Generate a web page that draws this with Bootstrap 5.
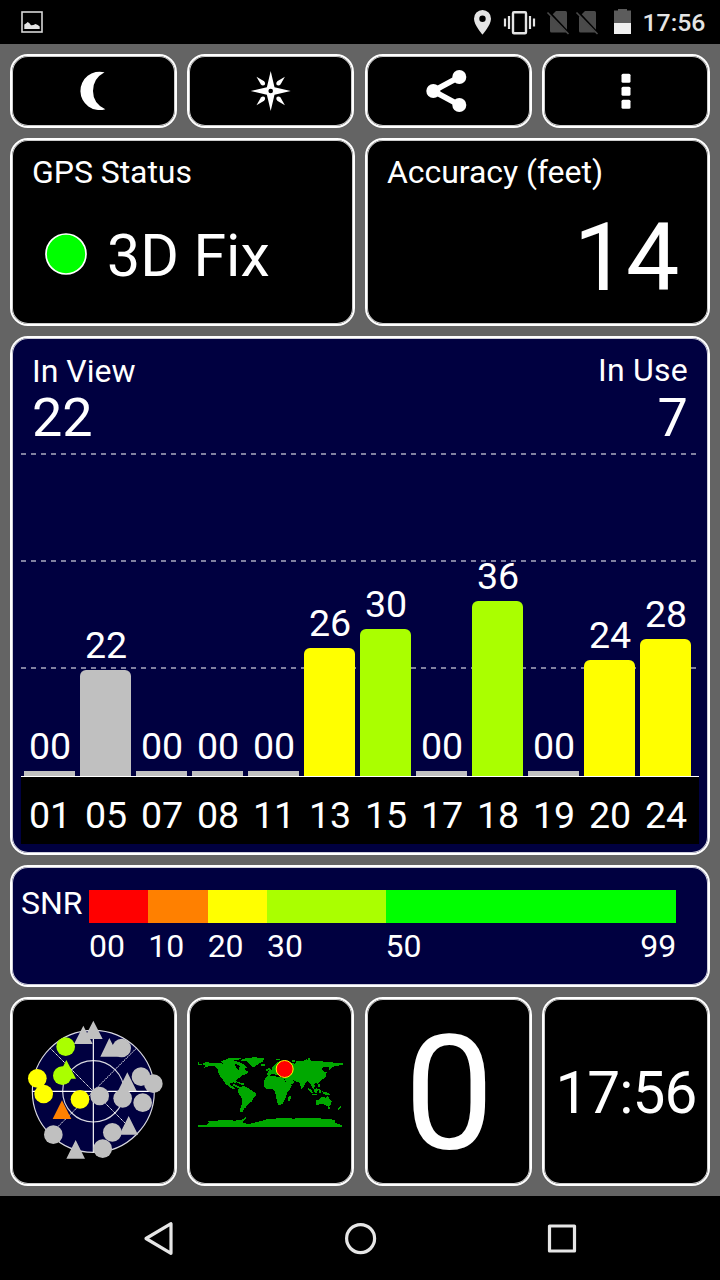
<!DOCTYPE html>
<html lang="en">
<head>
<meta charset="utf-8">
<meta name="viewport" content="width=device-width, initial-scale=1">
<title>GPS Test</title>
<link href="https://cdn.jsdelivr.net/npm/bootstrap@5.3.0/dist/css/bootstrap.min.css" rel="stylesheet">
<style>
body { width: 720px; height: 1280px; overflow: hidden; background: #000; color: #fff; font-family: Roboto, sans-serif; font-size: 32px; line-height: 38px; }
svg { display: block; }
.statusbar { height: 44px; color: #e4e4e4; font-size: 24.8px; font-weight: 500; line-height: 46px; }
.dash { height: 1152px; background: #646464; padding: 10px; gap: 10px; }
.tiles { display: grid; gap: 10px; }
.tiles-4 { grid-template-columns: 167px 167px 167px 168px; column-gap: 10.33px; }
.tiles-2 { grid-template-columns: 345px 345px; }
.panel { background: #000; border: 2px solid #fff; border-radius: 18px; box-shadow: inset 0 0 0 1px rgba(255,255,255,.8); color: #fff; overflow: hidden; }
.panel-navy { background: #000040; }
.row-tools { height: 74px; }
.row-info { height: 188px; }
.row-chart { height: 519px; }
.row-snr { height: 122px; }
.row-mini { height: 189px; }
.panel-title { padding: 13px 20px 0; letter-spacing: -.05px; }
.fix { font-size: 59px; line-height: 70px; padding: 30px 0 0 33px; }
.fix svg { margin-top: -4px; }
.fix span { margin-left: 4px; }
.acc { font-size: 95px; line-height: 112px; letter-spacing: -1px; padding: 11px 29.500px 0 0; }
.counts { height: 115px; padding: 14px 20px 0; }
.count { font-size: 54px; line-height: 56px; }
.inuse { margin-top: -1px; letter-spacing: .25px; }
.inuse .count { padding-top: 1px; }
.plot { height: 324px; margin: 0 9px; border-bottom: 1px solid #fff;
  --d: repeating-linear-gradient(90deg, #8080a0 0 5px, transparent 5px 10px);
  background: var(--d) 0 0/675px 2px no-repeat, var(--d) 0 107px/675px 2px no-repeat, var(--d) 0 214px/675px 2px no-repeat; }
.bars { gap: 5px; padding-left: 3px; font-size: 37.6px; }
.bars > div { width: 51px; }
.bars span { position: relative; left: .5px; }
.bar { border-radius: 6px 6px 0 0; }
.bar-flat { border-radius: 0; }
.val { line-height: 44px; margin-bottom: 3px; }
.prn { background: #000; margin: 0 9px; height: 67px; line-height: 76px; }
.g { background: #c0c0c0; } .y { background: #ff0; } .l { background: #af0; }
.r { background: #f00; } .o { background: #ff8000; } .gr { background: #0f0; }
.snr-body { padding: 23px 0 0 9px; }
.snr-name { width: 68px; margin-top: -6px; }
.scale { width: 587.2px; }
.scale > div > i { display: block; height: 33px; margin-bottom: 4px; }
.big0 { font-size: 160px; line-height: 190px; padding-left: 2px; }
.clock { font-size: 58.5px; line-height: 70px; letter-spacing: -.9px; padding-top: 59px; }
.navbtns { height: 84px; }
</style>
</head>
<body>
<header class="statusbar d-flex justify-content-between">
  <svg width="60" height="44"><rect x="22" y="12" width="20" height="20" fill="none" stroke="#d8d8d8" stroke-width="1.6"/><path d="M24.300 29V24.500Q26 23.500 27.700 22 29.500 23 31 25.300 33 25.500 35.500 24 38 24.500 39.700 26.500V29Z" fill="#e4e4e4"/></svg>
  <div class="d-flex">
    <svg width="172.500" height="44" viewBox="470 0 172.500 44">
      <path fill="#e4e4e4" fill-rule="evenodd" d="M482.500 10a8.500 8.500 0 0 0-8.500 8.700c0 6.300 8.500 15.800 8.500 15.800s8.500-9.500 8.500-15.800a8.500 8.500 0 0 0-8.500-8.700Zm0 5.500a3.200 3.200 0 1 1 0 6.400 3.200 3.200 0 0 1 0-6.400Z"/>
      <rect x="513" y="12.200" width="13" height="21" rx="1" fill="none" stroke="#e4e4e4" stroke-width="2.400"/>
      <path d="M505 18.500v8M509 16v13M530 16v13M534 18.500v8" stroke="#e4e4e4" stroke-width="2.200"/>
      <g id="sim"><path d="M556 11h9.500q1.500 0 1.500 1.500V31q0 1.500-1.500 1.500h-14q-1.500 0-1.500-1.500V17Z" fill="#4a4a4a"/><path d="M549 12l20 21.500" stroke="#000" stroke-width="2.400"/><path d="M547.500 12.500l21 21.500" stroke="#4a4a4a" stroke-width="1.600"/></g>
      <use href="#sim" x="29"/>
      <path d="M618 9h9v1.500h4v13h-17v-13h4Z" fill="#5c5c5c"/><path d="M614 23h17v11h-17Z" fill="#efefef"/>
    </svg>
    <span style="width:77.500px">17:56</span>
  </div>
</header>

<main class="dash d-flex flex-column">
  <div class="tiles tiles-4 row-tools">
    <button class="panel p-0"><svg width="163" height="70" viewBox="12 56 163 70"><path fill="#fff" d="M104.500 72.300A19.200 19.200 0 1 0 105.300 109.200Q93 103.500 93 91T104.500 72.300Z"/></svg></button>
    <button class="panel p-0"><svg width="163" height="70" viewBox="189.300 56 163 70"><g transform="translate(271 91)" fill="#fff"><path d="M0-20 3.800-3.800 20 0 3.800 3.800 0 20-3.800 3.800-20 0-3.800-3.800Z"/><g id="ray"><path d="M14.200-14.200 9.800-6.600Q8.200-4.800 6-6 4.800-8.200 6.600-9.800Z"/></g><use href="#ray" transform="rotate(90)"/><use href="#ray" transform="rotate(180)"/><use href="#ray" transform="rotate(270)"/><circle r="2.300" fill="#000"/></g></svg></button>
    <button class="panel p-0"><svg width="163" height="70" viewBox="366.700 56 163 70"><path d="M459 77 433 91l26 14" fill="none" stroke="#fff" stroke-width="5.600"/><g fill="#fff"><circle cx="459" cy="77" r="7"/><circle cx="433" cy="91" r="7"/><circle cx="459" cy="105" r="7"/></g></svg></button>
    <button class="panel p-0"><svg width="163" height="70" viewBox="544 56 163 70"><g fill="#fff"><rect x="621.500" y="73.700" width="9" height="9" rx="1.500"/><rect x="621.500" y="86.700" width="9" height="9" rx="1.500"/><rect x="621.500" y="99.800" width="9" height="9" rx="1.500"/></g></svg></button>
  </div>

  <div class="tiles tiles-2 row-info">
    <section class="panel">
      <div class="panel-title">GPS Status</div>
      <div class="fix d-flex align-items-center"><svg class="me-3" width="42" height="42"><circle cx="21" cy="21" r="20" fill="#0f0" stroke="#fff" stroke-width="1.700"/></svg><span>3D Fix</span></div>
    </section>
    <section class="panel">
      <div class="panel-title">Accuracy (feet)</div>
      <div class="acc text-end">14</div>
    </section>
  </div>

  <section class="panel panel-navy row-chart">
    <div class="counts d-flex justify-content-between">
      <div>In View<div class="count">22</div></div>
      <div class="inuse text-end">In Use<div class="count">7</div></div>
    </div>
    <div class="plot d-flex align-items-end">
      <div class="bars d-flex align-items-end text-center" id="bars"></div>
    </div>
    <div class="prn"><div class="bars d-flex text-center" id="prns"></div></div>
  </section>

  <section class="panel panel-navy row-snr">
    <div class="snr-body d-flex">
      <div class="snr-name">SNR</div>
      <div class="scale d-flex">
        <div style="flex:10 0 0"><i class="r"></i>00</div>
        <div style="flex:10 0 0"><i class="o"></i>10</div>
        <div style="flex:10 0 0"><i class="y"></i>20</div>
        <div style="flex:20 0 0"><i class="l"></i>30</div>
        <div style="flex:49 0 0"><i class="gr"></i><div class="d-flex justify-content-between"><span>50</span><span>99</span></div></div>
      </div>
    </div>
  </section>

  <div class="tiles tiles-4 row-mini">
    <section class="panel">
      <!-- sky plot -->
      <svg width="163" height="185" viewBox="6 -3 489 555">
        <g fill="#000040" stroke="#d8d8e0" stroke-width="3.500"><circle cx="250" cy="274" r="183"/><circle cx="250" cy="274" r="92" fill="none"/></g>
        <path d="M67 274h366M250 91v366" stroke="#fff" stroke-width="3.500"/>
        <path d="M121 145 379 403M379 145 121 403" stroke="#fff" stroke-width="3" stroke-dasharray="4 2"/>
        <g fill="#c0c0c0">
          <path d="M250 62l28 55h-56ZM220 77l28 55h-56ZM298 114l28 56h-55ZM352 217l28 56h-56ZM356 348l28 56h-56ZM197 420l28 56h-56Z"/>
          <circle cx="335" cy="144" r="28"/><circle cx="393" cy="230" r="28"/><circle cx="430" cy="251" r="28"/><circle cx="338" cy="295" r="28"/><circle cx="398" cy="308" r="28"/><circle cx="269" cy="288" r="28"/><circle cx="307" cy="397" r="28"/><circle cx="278" cy="446" r="28"/><circle cx="130" cy="404" r="28"/>
        </g>
        <g fill="#af0"><path d="M169 180l29 56h-57Z"/><circle cx="167" cy="140" r="28"/><circle cx="157" cy="227" r="28"/></g>
        <g fill="#ff0"><circle cx="82" cy="235" r="28"/><circle cx="101" cy="282" r="28"/><circle cx="210" cy="298" r="28"/></g>
        <path d="M156 301l28 56h-56Z" fill="#ff8000"/>
      </svg>
    </section>
    <section class="panel">
      <!-- world map with the current position -->
      <svg width="163" height="185" viewBox="10 -123 489 555" shape-rendering="crispEdges">
        <g fill="#00a800">
          <path d="M36 66h4v5h8v4H36ZM53 70L62 66 80 69 100 69 118 72 136 70 148 74 151 84 159 90 162 78 172 80 180 90 188 96 182 103 170 105 162 113 152 120 150 129 144 127 134 129 132 135 140 139 148 146 142 147 130 140 118 130 111 118 105 112 98 98 96 86 86 79 70 78 56 83 60 77 53 75Z"/>
          <path d="M105 65l10-6 14 2 10-4 10 6 14 4 12 6 8 10-6 4-10-8-14-6-20-2-16 2ZM118 57l24-4 22 1 4 4-18 1-10 4-18-2Z"/>
          <path d="M164 60l18-6 24-2 30 2-6 12-12 6-12 8-6 2-8-10-8-8-16-1ZM225 73h12v4h-12ZM150 123l16 5 12 4-8 3-18-8ZM142 132l12 4 8 6-4 3-14-7ZM182 92l6 3-4 4Z"/>
          <path d="M162 141L176 138 188 144 202 154 212 160 209 168 202 176 198 185 187 192 181 202 175 206 172 216H164L164 206 168 192 169 175 160 164 156 154 159 145Z"/>
          <path d="M242 110L256 107 268 109 278 112 293 113 299 125 306 136H318L313 147 304 157 302 168 295 185 289 193 278 195 274 184 271 168 267 152 258 147 242 147 234 139V125Z"/>
          <path d="M311 168h4v8l-5 8-4-2v-8Z"/>
          <path d="M244 102L247 94H256L259 84 267 74 278 65 292 62 306 65 318 68 328 71 333 63 350 64 363 58 378 62 407 63 419 66 440 67 456 70 471 69V75L457 77 445 79 436 86 429 94 430 82 416 81 407 86 414 94 424 98 420 104 421 110 412 117 407 122 400 126 398 132 390 129 385 132 388 140 383 147 378 140 374 131 366 124 358 132 351 144 346 143 341 128 331 124 322 121 326 128 315 134 307 138 303 132 297 118 295 110 284 109 276 104 268 104 260 101 252 107 244 106Z"/>
          <path d="M248 83h5l4 9-8 2ZM242 87h4v5h-4ZM270 58h14v3h-14ZM318 61h10v5h-10ZM366 55h8v4h-8Z"/>
          <path d="M417 97h4v8l-8 6-8 3v-4l8-5ZM368 143l8 6 6 10-4 2-10-12ZM384 150l8-6 5 5-4 9-8-1ZM398 148l6 0 2 10h-6ZM380 162h14v3h-14ZM397 132h5v10h-5ZM410 154l12 2 13 8-8 2-14-4ZM346 141h4v5h-4Z"/>
          <path d="M390 182l10-4 8-7 8-2 4 7 6-9 5 9 7 9-2 9-8 6-12-6-10-2-14 4ZM428 202h6v4h-6ZM463 198l4 4-8 8-3-3Z"/>
          <path d="M36 261V255H62L70 248 64 245 88 242 126 240 148 242 168 239 178 234 182 230 180 238 174 243 170 249 190 252 214 246 244 238 262 236 302 234 324 236 344 233 380 234 398 235 430 237 450 240 446 247 470 256V261Z"/>
        </g>
        <circle cx="297" cy="87" r="25.500" fill="red" stroke="#ff0" stroke-width="3" shape-rendering="auto"/>
      </svg>
    </section>
    <section class="panel text-center big0">0</section>
    <section class="panel text-center clock">17:56</section>
  </div>
</main>

<nav class="navbtns">
  <svg width="720" height="84" viewBox="0 1196 720 84" fill="none" stroke="#e6e6e6" stroke-width="3.200" stroke-linejoin="round"><path d="M171 1223.700v29.600l-25-14.800Z"/><circle cx="360.600" cy="1238.600" r="14"/><rect x="549.500" y="1226" width="25" height="25"/></svg>
</nav>

<script src="https://cdn.jsdelivr.net/npm/bootstrap@5.3.0/dist/js/bootstrap.bundle.min.js"></script>
<script>
// satellite number, signal label, bar height, colour class
const sats = [['01','00',5,'g'],['05','22',106,'g'],['07','00',5,'g'],['08','00',5,'g'],['11','00',5,'g'],['13','26',128,'y'],['15','30',147,'l'],['17','00',5,'g'],['18','36',175,'l'],['19','00',5,'g'],['20','24',116,'y'],['24','28',137,'y']];
bars.innerHTML = sats.map(s => `<div><div class="val"><span>${s[1]}</span></div><div class="bar ${s[3]} ${s[2] < 6 ? 'bar-flat' : ''}" style="height:${s[2]}px"></div></div>`).join('');
prns.innerHTML = sats.map(s => `<div><span>${s[0]}</span></div>`).join('');
</script>
</body>
</html>
